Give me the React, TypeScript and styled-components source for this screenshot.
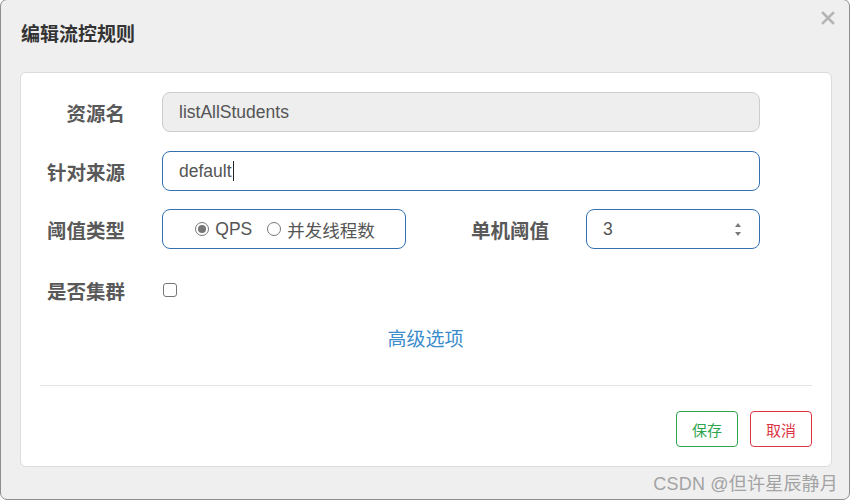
import React from "react";
import styled, { createGlobalStyle } from "styled-components";

const Global = createGlobalStyle`
  html, body { margin: 0; padding: 0; background: #ffffff; }
  body { font-family: "Liberation Sans", "Noto Sans CJK SC", sans-serif; }
  * { box-sizing: border-box; }
`;

const Page = styled.div`
  position: relative;
  width: 850px;
  height: 501px;
  overflow: hidden;
`;

const Dialog = styled.div`
  margin-top: -1px;
  width: 850px;
  height: 501px;
  background: #efefef;
  border: 1px solid #8e8e8e;
  border-radius: 7px;
  display: flex;
  flex-direction: column;
`;

const Header = styled.div`
  position: relative;
  height: 72px;
  padding: 0 0 8px 20px;
  display: flex;
  align-items: center;
`;

const Title = styled.h4`
  margin: 0;
  font-family: "Noto Sans CJK SC", sans-serif;
  font-weight: 700;
  font-size: 19px;
  color: #333333;
`;

const Close = styled.button`
  position: absolute;
  right: 13px;
  top: 10px;
  width: 16px;
  height: 16px;
  border: 0;
  padding: 0;
  background: transparent;
  display: flex;
  align-items: center;
  justify-content: center;
`;

const Panel = styled.div`
  margin-left: 19px;
  width: 812px;
  height: 395px;
  background: #ffffff;
  border: 1px solid #dcdcdc;
  border-radius: 6px;
  padding: 19px 19px 19px 0;
  display: flex;
  flex-direction: column;
`;

const Row = styled.div<{ $mb?: number }>`
  display: flex;
  align-items: center;
  height: 40px;
  margin-bottom: ${(p) => p.$mb ?? 19}px;
`;

const Label = styled.label<{ $w: number }>`
  width: ${(p) => p.$w}px;
  margin-right: 37px;
  text-align: right;
  font-family: "Noto Sans CJK SC", sans-serif;
  font-weight: 700;
  font-size: 19.5px;
  color: #595959;
  flex-shrink: 0;
`;

const Field = styled.div<{ $w: number; $state: "disabled" | "focus" }>`
  position: relative;
  width: ${(p) => p.$w}px;
  height: 40px;
  border-radius: 8px;
  border: 1px solid ${(p) => (p.$state === "disabled" ? "#cccccc" : "#3272b0")};
  background: ${(p) => (p.$state === "disabled" ? "#eeeeee" : "#ffffff")};
  padding: 0 16px;
  display: flex;
  align-items: center;
  font-size: 17.5px;
  color: #555555;
`;

const Caret = styled.span`
  display: inline-block;
  width: 1.5px;
  height: 20px;
  background: #222;
  margin-left: 1px;
`;

const RadioBox = styled.div`
  width: 244px;
  height: 40px;
  border-radius: 8px;
  border: 1px solid #3272b0;
  display: flex;
  align-items: center;
  justify-content: center;
  gap: 15px;
  padding-left: 2px;
`;

const RadioItem = styled.span`
  display: flex;
  align-items: center;
  gap: 6px;
  font-size: 17.5px;
  color: #555555;
  font-family: "Liberation Sans", "Noto Sans CJK SC", sans-serif;
`;

const RadioDot = styled.span<{ $checked?: boolean }>`
  width: 14px;
  height: 14px;
  border-radius: 50%;
  border: 1.5px solid #767676;
  display: flex;
  align-items: center;
  justify-content: center;
  &::after {
    content: "";
    width: 8px;
    height: 8px;
    border-radius: 50%;
    background: ${(p) => (p.$checked ? "#767676" : "transparent")};
  }
`;

const Spinner = styled.span`
  position: absolute;
  right: 17px;
  top: 10px;
  display: flex;
`;

const Checkbox = styled.span`
  width: 14px;
  height: 14px;
  border: 1.5px solid #767676;
  border-radius: 3px;
  background: #fff;
  margin-left: 1px;
`;

const LinkRow = styled.div`
  margin-top: 16px;
  height: 24px;
  display: flex;
  justify-content: center;
  padding-left: 18px;
`;

const Link = styled.a`
  font-family: "Noto Sans CJK SC", sans-serif;
  font-size: 19px;
  line-height: 24px;
  color: #3c8dcb;
  text-decoration: none;
`;

const Divider = styled.div`
  margin: 35px 0 25px 19px;
  height: 1px;
  background: #e5e5e5;
`;

const Footer = styled.div`
  display: flex;
  justify-content: flex-end;
  gap: 12px;
`;

const Btn = styled.button<{ $color: string }>`
  width: 62px;
  height: 36px;
  border-radius: 4px;
  background: #fff;
  border: 1px solid ${(p) => p.$color};
  color: ${(p) => p.$color};
  font-family: "Noto Sans CJK SC", sans-serif;
  font-size: 15px;
  padding: 0;
`;

const Watermark = styled.div`
  position: absolute;
  right: 12px;
  bottom: 6px;
  font-family: "Liberation Sans", "Noto Sans CJK SC", sans-serif;
  font-size: 18px;
  color: #a3a3a3;
  letter-spacing: 0.2px;
`;

export default function App() {
  return (
    <Page>
      <Global />
      <Dialog>
        <Header>
          <Title>编辑流控规则</Title>
          <Close aria-label="close">
            <svg width="14" height="14" viewBox="0 0 14 14">
              <path d="M2 2 L12 12 M12 2 L2 12" stroke="#b5b5b5" strokeWidth="2.6" strokeLinecap="square" />
            </svg>
          </Close>
        </Header>
        <Panel>
          <Row>
            <Label $w={104}>资源名</Label>
            <Field $w={598} $state="disabled">listAllStudents</Field>
          </Row>
          <Row $mb={18}>
            <Label $w={104}>针对来源</Label>
            <Field $w={598} $state="focus">
              default<Caret />
            </Field>
          </Row>
          <Row $mb={21}>
            <Label $w={104}>阈值类型</Label>
            <RadioBox>
              <RadioItem>
                <RadioDot $checked />
                QPS
              </RadioItem>
              <RadioItem>
                <RadioDot />
                并发线程数
              </RadioItem>
            </RadioBox>
            <Label $w={143}>单机阈值</Label>
            <Field $w={174} $state="focus">
              3
              <Spinner>
                <svg width="8" height="18" viewBox="0 0 8 18">
                  <path d="M1 7 L4 3 L7 7 Z" fill="#7a7a7a" />
                  <path d="M1 12 L4 16 L7 12 Z" fill="#7a7a7a" />
                </svg>
              </Spinner>
            </Field>
          </Row>
          <Row $mb={0}>
            <Label $w={104}>是否集群</Label>
            <Checkbox />
          </Row>
          <LinkRow>
            <Link href="#">高级选项</Link>
          </LinkRow>
          <Divider />
          <Footer>
            <Btn $color="#2ea44f">保存</Btn>
            <Btn $color="#dc3545">取消</Btn>
          </Footer>
        </Panel>
      </Dialog>
      <Watermark>CSDN @但许星辰静月</Watermark>
    </Page>
  );
}
